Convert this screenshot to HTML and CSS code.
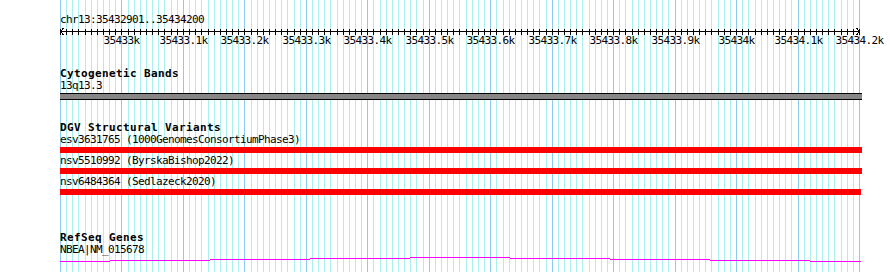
FILE: index.html
```html
<!DOCTYPE html>
<html lang="en">

<head>
  <meta charset="UTF-8">
  <title>chr13:35432901..35434200</title>
  <link rel="stylesheet" href="styles.css">
</head>

<body>
  <div class="browser">
    <svg class="grid" id="grid" width="890" height="272"></svg>

    <div class="tracks">
      <p class="pos">chr13:35432901..35434200</p>
      <svg class="ruler" id="ruler" width="830" height="21"></svg>

      <div class="track bands">
        <h3>Cytogenetic Bands</h3>
        <p class="label">13q13.3</p>
        <div class="band"></div>
      </div>

      <div class="track dgv">
        <h3>DGV Structural Variants</h3>
        <div class="feature">
          <p class="label">esv3631765 (1000GenomesConsortiumPhase3)</p>
          <div class="bar"></div>
        </div>
        <div class="feature">
          <p class="label">nsv5510992 (ByrskaBishop2022)</p>
          <div class="bar"></div>
        </div>
        <div class="feature">
          <p class="label">nsv6484364 (Sedlazeck2020)</p>
          <div class="bar short"></div>
        </div>
      </div>

      <div class="track refseq">
        <h3>RefSeq Genes</h3>
        <p class="label">NBEA|NM_015678</p>
        <svg class="gene" width="802" height="7">
          <path d="M0 5.5H50M50 4.5H150M150 3.5H250M250 2.5H350M350 1.5H450M450 2.5H550M550 3.5H650M650 4.5H750M750 5.5H801" />
        </svg>
      </div>
    </div>
  </div>

  <script src="ruler.js"></script>
</body>

</html>
```

FILE: styles.css
```css
* {
  box-sizing: border-box;
  margin: 0;
  padding: 0;
}

body {
  background: #fff;
  color: #000;
  font-family: "DejaVu Sans Mono", monospace;
}

.browser {
  position: relative;
  width: 890px;
  height: 272px;
  overflow: hidden;
}

/* grid sits under every track */
.grid {
  position: absolute;
  top: 0;
  left: 0;
}

.grid line {
  shape-rendering: crispEdges;
}

.grid .minor {
  stroke: #aaeeee;
}

.grid .major {
  stroke: #8ccbee;
}

.tracks {
  position: relative;
  padding-left: 60px;
}

.pos,
.label {
  font-size: 11px;
  letter-spacing: -0.62px;
  line-height: 12px;
  white-space: nowrap;
}

.pos {
  padding-top: 14px;
}

.ruler {
  display: block;
  overflow: visible;
}

.ruler line,
.ruler polyline {
  stroke: #000;
  fill: none;
  shape-rendering: crispEdges;
}

.ruler text {
  font-family: "DejaVu Sans Mono", monospace;
  font-size: 11px;
  letter-spacing: -0.62px;
  text-anchor: middle;
}

h3 {
  font-size: 11px;
  font-weight: bold;
  letter-spacing: 0.38px;
  line-height: 12px;
  white-space: nowrap;
}

.bands {
  padding-top: 21px;
}

.band {
  width: 802px;
  height: 7px;
  margin-top: 1px;
  background: #868686;
  border-top: 1px solid #000;
  border-bottom: 1px solid #000;
}

.dgv {
  padding-top: 22px;
}

.feature {
  padding-bottom: 2px;
}

.bar {
  width: 802px;
  height: 6px;
  margin-top: 1px;
  background: #ff0000;
}

.bar.short {
  width: 801px;
}

.refseq {
  padding-top: 35px;
}

.gene {
  display: block;
}

.gene path {
  stroke: #ff00ff;
  fill: none;
  shape-rendering: crispEdges;
}
```

FILE: ruler.js
```js
const LEFT = 60;
const START = 35432900, END = 35434200;
const SCALE = 799 / (END - START); // px per bp
const NS = 'http://www.w3.org/2000/svg';

function el(svg, name, attrs, text) {
  const node = document.createElementNS(NS, name);
  for (const k in attrs) node.setAttribute(k, attrs[k]);
  if (text) node.textContent = text;
  svg.appendChild(node);
  return node;
}

// one line every 10bp, darker every 100bp
const steps = (END - START) / 10;
const xs = [];
for (let i = 0; i <= steps; i++) xs.push(Math.round(i * 10 * SCALE));

const grid = document.getElementById('grid');
xs.forEach((x, i) => {
  el(grid, 'line', {
    x1: LEFT + x + 0.5, y1: 0, x2: LEFT + x + 0.5, y2: 272,
    class: i % 10 === 0 ? 'major' : 'minor'
  });
});

const ruler = document.getElementById('ruler');
const last = xs[xs.length - 1] + 1;
el(ruler, 'line', { x1: 0, y1: 5.5, x2: last, y2: 5.5 });
el(ruler, 'polyline', { points: '3.5,2 0.5,5.5 3.5,9' });
el(ruler, 'polyline', { points: `${last - 3.5},2 ${last - 0.5},5.5 ${last - 3.5},9` });

xs.forEach((x, i) => {
  el(ruler, 'line', { x1: x + 0.5, y1: 3, x2: x + 0.5, y2: 9 });
  if (i % 10 === 0 && i > 0) {
    const kb = (START + i * 10) / 1000;
    el(ruler, 'text', { x: x + 0.5, y: 18 }, kb + 'k');
  }
});
```
